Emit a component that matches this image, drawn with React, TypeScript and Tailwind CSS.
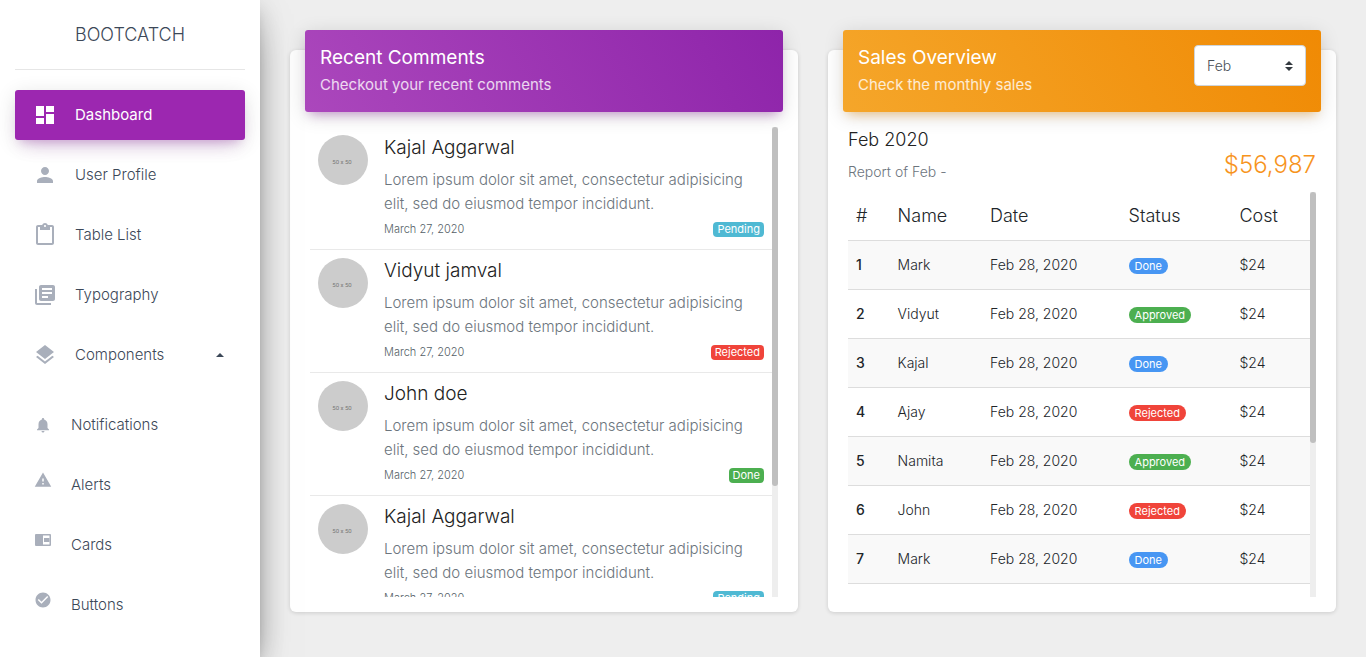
import React, { useEffect, useRef, useState } from "react";
import {
  MdDashboard,
  MdPerson,
  MdContentPaste,
  MdLibraryBooks,
  MdLayers,
  MdNotifications,
  MdWarning,
  MdCheckCircle,
} from "react-icons/md";

type Status = "Pending" | "Rejected" | "Done" | "Approved";
type Icon = React.ComponentType<{ size?: number; className?: string }>;

function CardsIcon({ size = 18, className }: { size?: number; className?: string }) {
  return (
    <svg width={size} height={size} viewBox="0 0 18 18" className={className} fill="currentColor">
      <path
        fillRule="evenodd"
        d="M2 3h14a1 1 0 0 1 1 1v10a1 1 0 0 1-1 1H2a1 1 0 0 1-1-1V4a1 1 0 0 1 1-1zM9 4.5v9h6.500v-9z"
      />
      <path d="M10 7h5.500v4H10z" />
    </svg>
  );
}

const mainLinks: { label: string; icon: Icon; active?: boolean }[] = [
  { label: "Dashboard", icon: MdDashboard, active: true },
  { label: "User Profile", icon: MdPerson },
  { label: "Table List", icon: MdContentPaste },
  { label: "Typography", icon: MdLibraryBooks },
];

const componentLinks: { label: string; icon: Icon; centered?: boolean }[] = [
  { label: "Notifications", icon: MdNotifications, centered: true },
  { label: "Alerts", icon: MdWarning },
  { label: "Cards", icon: CardsIcon },
  { label: "Buttons", icon: MdCheckCircle },
];

const statusColors: Record<Status, string> = {
  Done: "bg-[#4796f3]",
  Approved: "bg-[#4caf50]",
  Rejected: "bg-[#f0443a]",
  Pending: "bg-[#4fb9d3]",
};

const comments: { name: string; status: Status; color: string }[] = [
  { name: "Kajal Aggarwal", status: "Pending", color: "bg-[#4fb9d3]" },
  { name: "Vidyut jamval", status: "Rejected", color: "bg-[#f0443a]" },
  { name: "John doe", status: "Done", color: "bg-[#4caf50]" },
  { name: "Kajal Aggarwal", status: "Pending", color: "bg-[#4fb9d3]" },
  { name: "Vidyut jamval", status: "Rejected", color: "bg-[#f0443a]" },
];

const sales: [string, Status][] = [
  ["Mark", "Done"],
  ["Vidyut", "Approved"],
  ["Kajal", "Done"],
  ["Ajay", "Rejected"],
  ["Namita", "Approved"],
  ["John", "Rejected"],
  ["Mark", "Done"],
  ["Vidyut", "Approved"],
  ["Kajal", "Done"],
  ["Ajay", "Rejected"],
  ["Namita", "Approved"],
  ["John", "Rejected"],
];

/* Scrolling region with its own slim track and thumb. */
function ScrollArea({
  label,
  className,
  children,
}: {
  label: string;
  className: string;
  children: React.ReactNode;
}) {
  const view = useRef<HTMLDivElement>(null);
  const [thumb, setThumb] = useState({ size: 0, start: 0 });

  const measure = () => {
    const el = view.current;
    if (!el) return;
    const ratio = el.clientHeight / el.scrollHeight;
    setThumb({ size: el.clientHeight * ratio, start: el.scrollTop * ratio });
  };

  useEffect(() => {
    measure();
    window.addEventListener("resize", measure);
    return () => window.removeEventListener("resize", measure);
  }, []);

  return (
    <div className={"mx-5 flex " + className}>
      <div
        ref={view}
        onScroll={measure}
        tabIndex={0}
        role="region"
        aria-label={label}
        className="min-w-0 flex-1 overflow-y-auto [scrollbar-width:none]"
      >
        {children}
      </div>
      <div aria-hidden="true" className="w-[6px] shrink-0 bg-[#eeeeee]">
        <div
          className="rounded-full bg-[#bfbfbf]"
          style={{ height: thumb.size, marginTop: thumb.start }}
        />
      </div>
    </div>
  );
}

function Sidebar() {
  const [open, setOpen] = useState(true);
  return (
    <aside className="relative z-10 w-[260px] shrink-0 overflow-hidden bg-white px-[15px] text-[#3c4858] shadow-[0_16px_38px_-12px_rgba(0,0,0,0.56),0_4px_25px_0_rgba(0,0,0,0.12),0_8px_10px_-5px_rgba(0,0,0,0.2)]">
      <a
        href="#home"
        className="flex h-[70px] items-center border-b border-[#e6e6e6] pl-[60px] text-lg font-light"
      >
        BOOTCATCH
      </a>
      <nav className="mt-5 text-[15px] leading-[30px]">
        <ul className="flex flex-col gap-[10px]">
          {mainLinks.map(({ label, icon: Icon, active }) => (
            <li key={label}>
              <a
                href={"#" + label.toLowerCase().replace(" ", "-")}
                className={
                  active
                    ? "flex h-[50px] items-center gap-[18px] rounded-[3px] bg-[#9c27b0] pl-[18px] text-white shadow-[0_12px_20px_-10px_rgba(156,39,176,0.28),0_4px_20px_0_rgba(0,0,0,0.12),0_7px_8px_-5px_rgba(156,39,176,0.2)]"
                    : "flex h-[50px] items-center gap-[18px] pl-[18px] font-light"
                }
              >
                <Icon size={24} className={active ? "text-white" : "text-[#a9afbb]"} />
                {label}
              </a>
            </li>
          ))}
          <li>
            <button
              type="button"
              aria-expanded={open}
              onClick={() => setOpen(!open)}
              className="flex h-[50px] w-full items-center gap-[18px] pr-[21px] pl-[18px] font-light"
            >
              <MdLayers size={24} className="text-[#a9afbb]" />
              Components
              <svg width="8" height="4" viewBox="0 0 8 4" className="ml-auto">
                <path d="M0 4 4 0l4 4z" fill="#3c4858" />
              </svg>
            </button>
          </li>
        </ul>
        {open && (
          <ul className="mt-5 flex flex-col gap-[10px]">
            {componentLinks.map(({ label, icon: Icon, centered }) => (
              <li key={label}>
                <a
                  href={"#" + label.toLowerCase()}
                  className="flex h-[50px] items-center gap-[19px] pl-[19px] font-light"
                >
                  <Icon size={18} className={centered ? "text-[#a9afbb]" : "mb-[10px] text-[#a9afbb]"} />
                  {label}
                </a>
              </li>
            ))}
          </ul>
        )}
      </nav>
    </aside>
  );
}

function CommentsCard() {
  return (
    <section className="min-w-0 flex-1 rounded-md bg-white pb-[15px] shadow-[0_1px_4px_0_rgba(0,0,0,0.14)]">
      <header className="mx-[15px] -mt-5 h-[82px] rounded-[3px] bg-[linear-gradient(60deg,#ab47bc,#8e24aa)] p-[15px] text-white shadow-[0_4px_20px_0_rgba(0,0,0,0.14),0_7px_10px_-5px_rgba(156,39,176,0.4)]">
        <h2 className="text-[19px] leading-[26px]">Recent Comments</h2>
        <p className="mt-[3px] text-[15px] leading-[21px] text-white/80">
          Checkout your recent comments
        </p>
      </header>
      <ScrollArea label="Recent comments" className="mt-[15px] h-[470px]">
        <ul>
          {comments.map((c, i) => (
            <li key={i} className="flex h-[123px] gap-4 border-b border-[#e9e9e9] p-2">
              <svg width="50" height="50" viewBox="0 0 50 50" className="shrink-0">
                <circle cx="25" cy="25" r="25" fill="#cccccc" />
                <text x="24" y="29" textAnchor="middle" fontSize="6" fontFamily="Roboto, sans-serif" fill="#777777">
                  50 x 50
                </text>
              </svg>
              <div className="min-w-0 flex-1">
                <h3 className="text-[19px] leading-[25px] font-light text-[#222222]">{c.name}</h3>
                <p className="mt-2 text-[15px] leading-6 font-light text-[#6c757d]">
                  Lorem ipsum dolor sit amet, consectetur adipisicing elit, sed do eiusmod tempor incididunt.
                </p>
                <div className="flex h-[26px] items-center justify-between text-[11px]">
                  <time className="font-light text-[#555f67]">March 27, 2020</time>
                  <span className={"rounded px-1 leading-[15px] text-white " + c.color}>{c.status}</span>
                </div>
              </div>
            </li>
          ))}
        </ul>
      </ScrollArea>
    </section>
  );
}

function SalesCard() {
  return (
    <section className="min-w-0 flex-1 rounded-md bg-white pb-[15px] shadow-[0_1px_4px_0_rgba(0,0,0,0.14)]">
      <header className="mx-[15px] -mt-5 flex h-[82px] items-start justify-between rounded-[3px] bg-[linear-gradient(60deg,#f5a62a,#f08a04)] p-[15px] text-white shadow-[0_4px_20px_0_rgba(0,0,0,0.14),0_7px_10px_-5px_rgba(255,152,0,0.4)]">
        <div>
          <h2 className="text-[19px] leading-[26px]">Sales Overview</h2>
          <p className="mt-[3px] text-[15px] leading-[21px] text-white/80">Check the monthly sales</p>
        </div>
        <label className="grid items-center">
          <span className="sr-only">Month</span>
          <select
            defaultValue="Feb"
            className="col-start-1 row-start-1 h-[41px] w-[112px] appearance-none rounded border border-[#ced4da] bg-white px-3 text-[14px] font-light text-[#495057]"
          >
            <option>Jan</option>
            <option>Feb</option>
            <option>Mar</option>
          </select>
          <svg
            width="8"
            height="10"
            viewBox="0 0 8 10"
            className="pointer-events-none col-start-1 row-start-1 mr-[13px] justify-self-end"
          >
            <path d="M0 4 4 0l4 4zM0 6h8l-4 4z" fill="#343a40" />
          </svg>
        </label>
      </header>
      <div className="mx-5 mt-[15px] flex h-[65px] items-start justify-between">
        <div>
          <h3 className="text-lg leading-[26px] font-light text-[#222222]">Feb 2020</h3>
          <p className="mt-2 text-[14px] leading-[21px] font-light text-[#6c757d]">Report of Feb -</p>
        </div>
        <strong className="mt-[18px] text-2xl leading-[39px] font-light text-[#f7941d]">$56,987</strong>
      </div>
      <ScrollArea label="Monthly sales" className="h-[405px]">
        <table className="mb-4 w-full table-fixed border-collapse text-left text-[14px] font-light text-[#212529]">
          <colgroup>
            <col className="w-[9%]" />
            <col className="w-[20%]" />
            <col className="w-[30%]" />
            <col className="w-[24%]" />
            <col className="w-[17%]" />
          </colgroup>
          <thead>
            <tr className="h-12 border-b border-[#dddddd] text-lg">
              {["#", "Name", "Date", "Status", "Cost"].map((h) => (
                <th key={h} scope="col" className="px-2 font-light">
                  {h}
                </th>
              ))}
            </tr>
          </thead>
          <tbody>
            {sales.map(([name, status], i) => (
              <tr key={i} className="h-[49px] border-b border-[#dddddd] odd:bg-[#f9f9f9]">
                <th scope="row" className="px-2 font-medium">
                  {i + 1}
                </th>
                <td className="px-2">{name}</td>
                <td className="px-2">Feb 28, 2020</td>
                <td className="px-2">
                  <span
                    className={
                      "inline-block rounded-full px-[6px] text-[11px] leading-4 font-normal text-white " +
                      statusColors[status]
                    }
                  >
                    {status}
                  </span>
                </td>
                <td className="px-2">$24</td>
              </tr>
            ))}
          </tbody>
        </table>
      </ScrollArea>
    </section>
  );
}

export default function App() {
  return (
    <div className="flex h-screen overflow-hidden bg-[#eeeeee] font-[Inter,'Open_Sans',sans-serif]">
      <Sidebar />
      <main className="flex min-w-0 flex-1 items-start gap-[30px] px-[30px] pt-[50px]">
        <CommentsCard />
        <SalesCard />
      </main>
    </div>
  );
}
